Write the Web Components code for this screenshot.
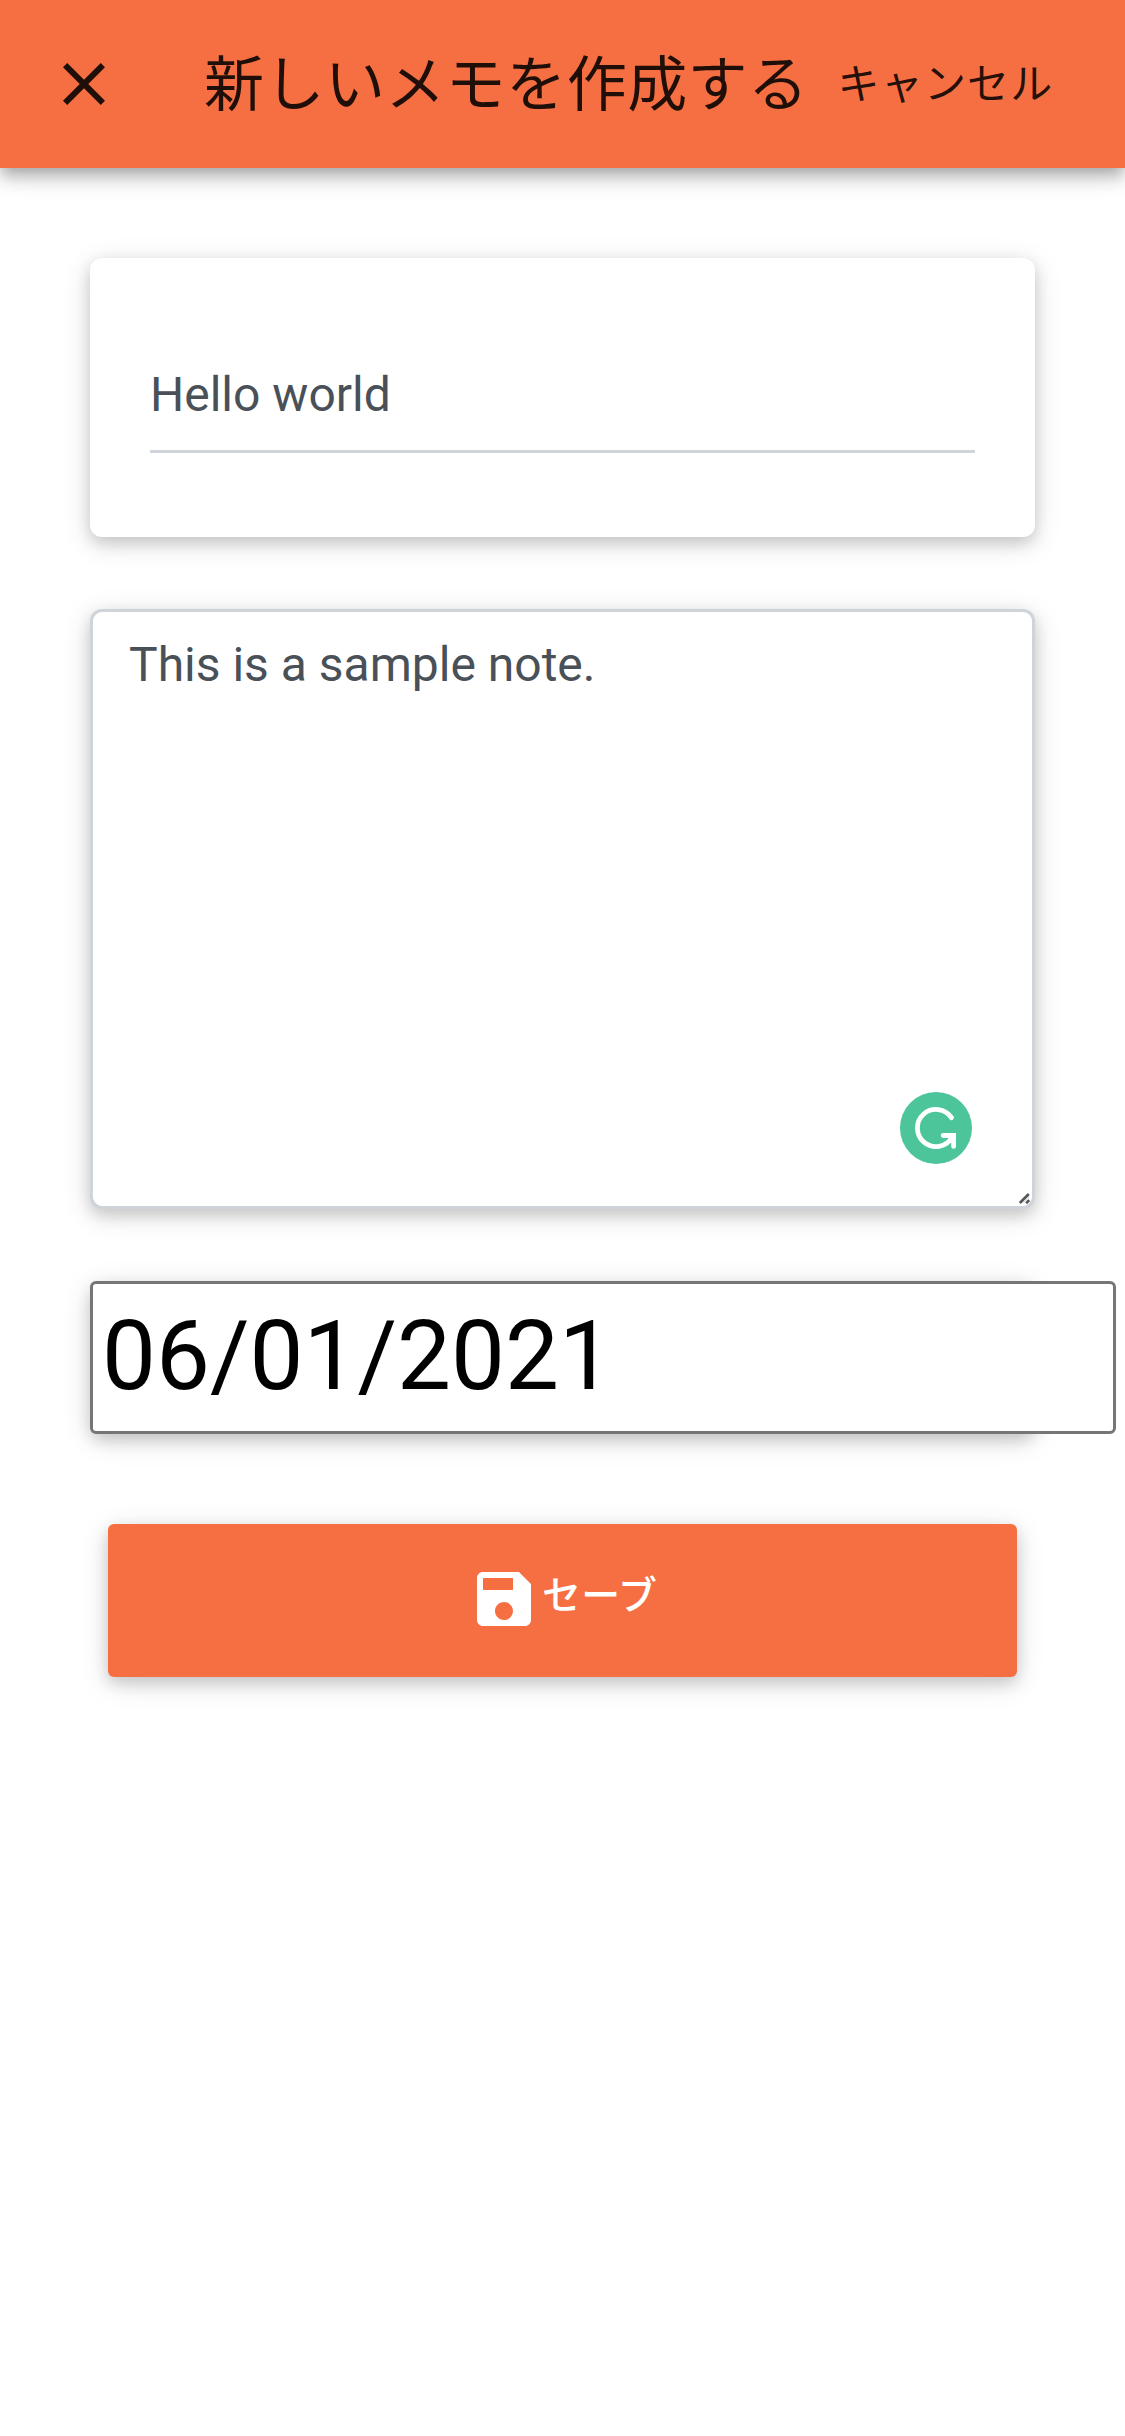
<!DOCTYPE html>
<html lang="ja">
<head>
<meta charset="utf-8">
<title>メモ</title>
<style>
html,body{margin:0;padding:0;background:#fff;overflow-x:hidden}
body{min-height:2436px;font-family:Roboto,"Noto Sans CJK JP",sans-serif}
</style>
</head>
<body>
<note-page>
  <app-bar slot="bar"><span slot="title">新しいメモを作成する</span><span slot="action">キャンセル</span></app-bar>
  <title-card>Hello world</title-card>
  <note-area>This is a sample note.</note-area>
  <date-field>06/01/2021</date-field>
  <save-button>セーブ</save-button>
</note-page>
<script>
const define = (name, html) => customElements.define(name, class extends HTMLElement {
  constructor() {
    super();
    const t = document.createElement('template');
    t.innerHTML = html;
    this.attachShadow({ mode: 'open' }).append(t.content.cloneNode(true));
  }
});
const depth = 'box-shadow:0 6px 15px rgba(0,0,0,.16),0 6px 30px rgba(0,0,0,.12);';

define('note-page', `<style>
:host{display:flex;flex-direction:column;width:1125px;min-height:2436px}
main{display:flex;flex-direction:column;padding:90px 90px 0}
</style><slot name="bar"></slot><main><slot></slot></main>`);

define('app-bar', `<style>
:host{display:flex;align-items:center;box-sizing:border-box;height:168px;padding-left:48px;background:#f66f42;color:rgba(0,0,0,.87);white-space:nowrap;
box-shadow:0 6px 12px -3px rgba(0,0,0,.2),0 12px 15px 0 rgba(0,0,0,.14),0 3px 30px 0 rgba(0,0,0,.12)}
svg{width:72px;height:72px;flex:none}
h1{margin:4px 0 0 84px;font-size:60px;font-weight:400;letter-spacing:.45px;line-height:96px}
.action{margin:2px 0 0 29px;font-size:42px;font-weight:400;letter-spacing:1.2px;line-height:74px}
</style>
<svg viewBox="0 0 24 24" fill="currentColor"><path d="M19 6.41L17.59 5 12 10.59 6.41 5 5 6.41 10.59 12 5 17.59 6.41 19 12 13.41 17.59 19 19 17.59 13.41 12z"/></svg>
<h1><slot name="title"></slot></h1><div class="action"><slot name="action"></slot></div>`);

define('title-card', `<style>
:host{display:flex;flex-direction:column;box-sizing:border-box;height:279px;padding:78px 60px 0;border-radius:12px;background:#fff;${depth}}
div{box-sizing:border-box;height:117px;padding-top:23px;border-bottom:3px solid #ced4da;color:#495057;font-size:48px;line-height:72px}
</style><div><slot></slot></div>`);

define('note-area', `<style>
:host{display:flex;flex-direction:column;position:relative;box-sizing:border-box;height:600px;margin-top:72px;padding:17px 36px;border:3px solid #ced4da;border-radius:12px;background:#fff;color:#495057;font-size:48px;line-height:72px;${depth}}
.badge{position:absolute;right:60px;bottom:42px;width:72px;height:72px}
.grip{position:absolute;right:2px;bottom:2px;width:12px;height:12px}
</style><slot></slot>
<svg class="badge" viewBox="0 0 72 72"><circle cx="36" cy="36" r="36" fill="#4dc59b"/><path d="M51.5 25.7A18.6 18.6 0 1 0 52 45.5M43.2 43.5H53.6V54.4" fill="none" stroke="#fff" stroke-width="4.8" stroke-linecap="round"/><path d="M49 41.1H56V50z" fill="#fff"/></svg>
<svg class="grip" viewBox="0 0 12 12"><path d="M1.8 11L10.8 2M8.2 11.2L11.2 8.2" stroke="#555" stroke-width="2.6"/><path d="M5 11L11 5" stroke="#ddd" stroke-width="1.5"/></svg>`);

define('date-field', `<style>
:host{display:block;margin-top:72px;height:153px;border-radius:12px;${depth}}
div{box-sizing:border-box;width:1026px;height:153px;padding:0 9px;border:3px solid #767676;border-radius:6px;background:#fff;color:#000;font-size:96px;line-height:145px}
</style><div><slot></slot></div>`);

define('save-button', `<style>
:host{display:flex;box-sizing:border-box;align-items:center;justify-content:flex-start;height:153px;margin:90px 18px 0;padding-left:360px;border-radius:6px;background:#f66f42;color:#fff;${depth}}
svg{width:72px;height:72px;flex:none;margin-top:-3px}
span{margin:-10px 0 0 2px;font-size:38.9px;font-weight:500;line-height:58px;letter-spacing:.3px}
</style>
<svg viewBox="0 0 24 24" fill="currentColor"><path d="M17 3H5c-1.11 0-2 .9-2 2v14c0 1.1.89 2 2 2h14c1.1 0 2-.9 2-2V7l-4-4zm-5 16c-1.66 0-3-1.34-3-3s1.34-3 3-3 3 1.34 3 3-1.34 3-3 3zm3-10H5V5h10v4z"/></svg><span><slot></slot></span>`);
</script>
</body>
</html>
